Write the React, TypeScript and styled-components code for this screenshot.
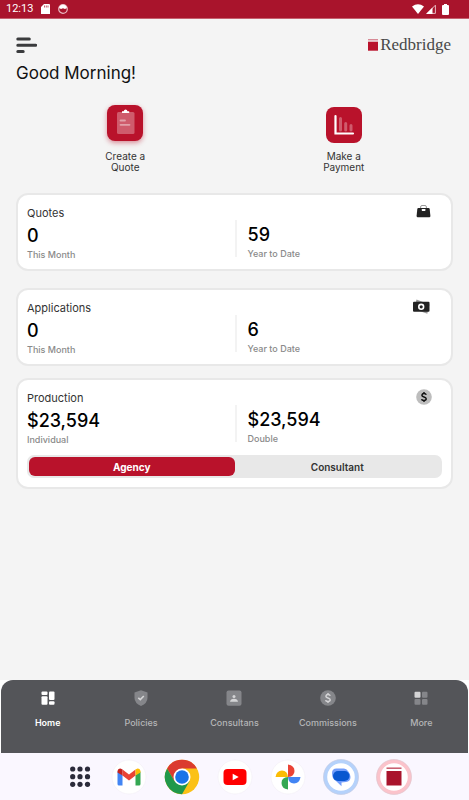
import React, { useState } from "react";
import styled, { createGlobalStyle } from "styled-components";

const GlobalStyle = createGlobalStyle`
  * { box-sizing: border-box; }
  body { margin: 0; background: #f4f4f4; }
  button { font: inherit; color: inherit; border: 0; padding: 0; background: none; cursor: pointer; }
  svg { display: block; flex: none; }
`;

const Screen = styled.div`
  display: flex;
  flex-direction: column;
  min-height: 100vh;
  background: #f4f4f4;
  color: #111;
  font-family: Inter, "Liberation Sans", sans-serif;
`;

const StatusBar = styled.div`
  display: flex;
  align-items: center;
  justify-content: space-between;
  height: 19px;
  padding: 0 20px 0 6px;
  background: #a9142c;
  border-bottom: 1px solid #c5616f;
  color: #fff;
  font: 400 11px/18px Roboto, sans-serif;
`;

const StatusGroup = styled.div<{ $gap: number }>`
  display: flex;
  align-items: center;
  gap: ${(p) => p.$gap}px;
`;

const Content = styled.main`
  flex: 1;
  padding: 17px 16px 24px;
`;

const TopBar = styled.header`
  display: flex;
  align-items: flex-start;
  justify-content: space-between;
  height: 26px;
`;

const Brand = styled.div`
  display: flex;
  align-items: center;
  gap: 2px;
  padding-right: 2px;
  color: #484848;
  font: 17px/18px "Liberation Serif", serif;
`;

const Greeting = styled.h1`
  margin: 0;
  font-size: 17px;
  line-height: 22px;
  font-weight: 400;
`;

const Actions = styled.div`
  display: grid;
  grid-template-columns: 1fr 1fr;
  margin: 21px 0 20px;
`;

const Action = styled.button`
  display: flex;
  flex-direction: column;
  align-items: center;
  justify-content: space-between;
  justify-self: center;
  width: 64px;
  height: 68px;
  font-size: 10px;
  line-height: 11px;
  color: #333;
`;

const ActionTile = styled.span<{ $raised?: boolean }>`
  display: block;
  width: 36px;
  height: 36px;
  margin-top: ${(p) => (p.$raised ? 0 : 2)}px;
  border-radius: 8px;
  background: #b9122b;
  box-shadow: ${(p) => (p.$raised ? "0 2px 5px rgba(185, 18, 43, 0.45)" : "none")};
`;

const ActionLabel = styled.span`
  width: 46px;
`;

const Card = styled.section<{ $gap: number }>`
  margin-bottom: ${(p) => p.$gap}px;
  padding: 9px;
  border: 2px solid #e8e8e8;
  border-radius: 12px;
  background: #fff;
`;

const CardHead = styled.div`
  display: flex;
  align-items: flex-start;
  justify-content: space-between;
  height: 16px;
  padding-right: 10px;
`;

const CardTitle = styled.h2`
  margin: 0;
  font-size: 11px;
  line-height: 18px;
  font-weight: 400;
  color: #333;
`;

const Stats = styled.div`
  display: grid;
  grid-template-columns: 1fr 1fr;
  padding-bottom: 3px;
`;

const Stat = styled.div<{ $divided?: boolean }>`
  height: 37px;
  padding: ${(p) => (p.$divided ? "4px 0 0 11px" : "5px 0 0")};
  border-left: ${(p) => (p.$divided ? "2px solid #f3f3f3" : "0")};
`;

const StatValue = styled.div`
  font-size: 18px;
  line-height: 22px;
  font-weight: 500;
  color: #000;
`;

const StatLabel = styled.div`
  font-size: 9px;
  line-height: 16px;
  font-weight: 500;
  color: #8a8a8a;
`;

const Toggle = styled.div`
  display: grid;
  grid-template-columns: 1fr 1fr;
  margin-top: 10px;
  padding: 2px;
  border-radius: 7px;
  background: #e8e8e8;
`;

const ToggleButton = styled.button<{ $active: boolean }>`
  height: 19px;
  border-radius: 6px;
  background: ${(p) => (p.$active ? "#b9122b" : "transparent")};
  color: ${(p) => (p.$active ? "#fff" : "#333")};
  font-size: 10px;
  line-height: 20px;
  font-weight: ${(p) => (p.$active ? 700 : 600)};
`;

const NavBack = styled.div`
  padding: 0 1px;
  background: #fff;
`;

const Nav = styled.nav`
  display: grid;
  grid-template-columns: repeat(5, 1fr);
  height: 73px;
  padding-top: 10px;
  border-radius: 12px 12px 0 0;
  background: #545559;
`;

const NavItem = styled.button<{ $active: boolean }>`
  display: flex;
  flex-direction: column;
  align-items: center;
  gap: 11px;
  height: 40px;
  font-size: 9px;
  line-height: 12px;
  font-weight: ${(p) => (p.$active ? 600 : 500)};
  color: ${(p) => (p.$active ? "#fff" : "#b4b5b7")};
`;

const Dock = styled.div`
  display: flex;
  justify-content: center;
  height: 47px;
  background: #faf7ff;
`;

const DockButton = styled.button<{ $inset?: boolean }>`
  display: flex;
  align-items: center;
  justify-content: center;
  width: 53px;
  padding-left: ${(p) => (p.$inset ? 8 : 0)}px;
`;

const DockIcon = styled.svg`
  width: 36px;
  height: 36px;
`;

const BriefcaseIcon = () => (
  <svg width="16" height="16" viewBox="0 0 16 16">
    <path d="M4.600 4.500V3Q4.600 1.500 6 1.500h3q1.400 0 1.400 1.500v1.500" fill="none" stroke="#999" strokeWidth="1" />
    <path d="M2.300 4h10.400q.9 0 1 .9l.7 7.100q0 1.300-1.100 1.300H1.700Q.6 13.300.6 12l.7-7.100q.1-.9 1-.9z" fill="#222" />
    <rect x="5.800" y="5" width="3.600" height="2" rx=".4" fill="#fff" />
  </svg>
);

const CashIcon = () => (
  <svg width="20" height="16" viewBox="0 0 20 16">
    <path d="M4.500.5 17.500 5.500 15.300 14.700 2 10z" fill="#999" />
    <rect x="1" y="2.800" width="16.500" height="10" rx="1" fill="#222" />
    <circle cx="9.200" cy="7.800" r="2.400" fill="#222" stroke="#fff" strokeWidth="1.600" />
  </svg>
);

const CoinIcon = ({ disc, ink }: { disc: string; ink: string }) => (
  <svg width="16" height="16" viewBox="0 0 16 16">
    <circle cx="8" cy="8" r="7.800" fill={disc} />
    <path d="M10.300 5.700Q9.800 4.600 8 4.600T5.900 6.200Q5.900 7.400 8 7.900T10.200 9.800Q10.200 11.400 8 11.400T5.600 10.100M8 2.900v1.800M8 11.300v1.800" fill="none" stroke={ink} strokeWidth="1.500" />
  </svg>
);

const ClipboardArt = () => (
  <svg width="36" height="36" viewBox="0 0 36 36">
    <rect x="10" y="7" width="17.500" height="22" rx="1.500" fill="#cf5b6c" />
    <path d="M15 8V6.300h1.700Q17 4.500 18.600 4.500T20.500 6.300h1.700V8z" fill="#fff" />
    <path d="M13.500 15.500h4.500M13.500 19.800h9" stroke="#e2a0a9" strokeWidth="1.800" strokeLinecap="round" />
  </svg>
);

const ChartArt = () => (
  <svg width="36" height="36" viewBox="0 0 36 36">
    <path d="M14.500 11.500v11.500M19.700 16.500v6.500M25 18.500v4.500" stroke="#cf5b6c" strokeWidth="3" strokeLinecap="round" />
    <path d="M9.500 9v17.500h17.500" fill="none" stroke="#fff" strokeWidth="2.200" strokeLinecap="round" />
  </svg>
);

const HomeIcon = () => (
  <svg width="16" height="16" viewBox="0 0 16 16" fill="#fff">
    <rect x="1.500" y="1.500" width="6" height="3.500" rx="1" />
    <rect x="1.500" y="6.300" width="6" height="8.500" rx="1" />
    <rect x="9" y="1.500" width="5.500" height="8.500" rx="1" />
    <rect x="9" y="11.300" width="5.500" height="3.500" rx="1" />
  </svg>
);

const ShieldIcon = () => (
  <svg width="16" height="16" viewBox="0 0 16 16">
    <path d="M8 .3 14.500 2.500V8Q14.500 13 8 16 1.500 13 1.500 8V2.500z" fill="#85868a" />
    <path d="m5.300 7.800 2 1.800 3.500-3.600" fill="none" stroke="#d4d4d6" strokeWidth="1.600" />
  </svg>
);

const PersonIcon = () => (
  <svg width="16" height="16" viewBox="0 0 16 16">
    <rect x=".5" y=".5" width="15" height="15.300" rx="2" fill="#85868a" />
    <circle cx="8" cy="6.400" r="1.500" fill="#d4d4d6" />
    <path d="M4 11.700Q4.500 8.800 8 8.800t4 2.900z" fill="#d4d4d6" />
  </svg>
);

const MoreIcon = () => (
  <svg width="16" height="16" viewBox="0 0 16 16" fill="#85868a">
    <rect x="1.500" y="1.700" width="6" height="6" rx="1" fill="#d4d4d6" />
    <rect x="9" y="1.700" width="5.500" height="6" rx="1" />
    <rect x="1.500" y="9" width="6" height="5.800" rx="1" />
    <rect x="9" y="9" width="5.500" height="5.800" rx="1" />
  </svg>
);

const Plate = () => <circle cx="18" cy="18" r="17" fill="#fff" stroke="#f1eff5" strokeWidth=".6" />;

const dockApps = [
  {
    name: "All apps",
    art: <g fill="#2b2b3b">{[10, 17.700, 25.300].map((y) => [10.700, 18, 25.500].map((x) => <circle key={`${x}-${y}`} cx={x} cy={y} r="2.600" />))}</g>,
  },
  {
    name: "Gmail",
    art: (
      <>
        <Plate />
        <path d="M6.500 12.500 11.500 16v10.500H8q-1.500 0-1.500-1.500z" fill="#4285f4" />
        <path d="M24.500 16 29.500 12.500V25q0 1.500-1.500 1.500h-3.500z" fill="#34a853" />
        <path d="M11.500 16.500V10.500l6.500 5 6.500-5v6L18 21.500z" fill="#ea4335" />
        <path d="M6.500 12.500Q6.700 9.500 9.500 9.500l2 1v6l-5-3z" fill="#c5221f" />
        <path d="M29.500 12.500Q29.300 9.500 26.500 9.500l-2 1v6l5-3z" fill="#fbbc04" />
      </>
    ),
  },
  {
    name: "Chrome",
    art: (
      <>
        <circle cx="18" cy="18" r="17.200" fill="#fbc116" />
        <path d="M3.100 9.400A17.200 17.200 0 0 1 32.900 9.400H18L10.500 22.300z" fill="#db3b2f" />
        <path d="M3.100 9.400A17.200 17.200 0 0 0 18 35.200L25.500 22.300H10.500z" fill="#20984b" />
        <circle cx="18" cy="18" r="8.500" fill="#fff" />
        <circle cx="18" cy="18" r="6.800" fill="#1a73e8" />
      </>
    ),
  },
  {
    name: "YouTube",
    art: (
      <>
        <Plate />
        <rect x="6.500" y="10" width="23" height="16" rx="4" fill="#f00" />
        <path d="m15.700 14.700 6 3.300-6 3.300z" fill="#fff" />
      </>
    ),
  },
  {
    name: "Photos",
    art: (
      <>
        <Plate />
        <path d="M18 5.500Q24.500 6.500 24.500 12T18 18z" fill="#ea4335" />
        <path d="M30.500 18Q29.500 24.500 24 24.500T18 18z" fill="#4285f4" />
        <path d="M18 30.500Q11.500 29.500 11.500 24T18 18z" fill="#34a853" />
        <path d="M5.500 18Q6.500 11.500 12 11.500T18 18z" fill="#fbbc04" />
      </>
    ),
  },
  {
    name: "Messages",
    art: (
      <>
        <circle cx="18" cy="18" r="15.700" fill="#fff" stroke="#b5d2fb" strokeWidth="3.800" />
        <circle cx="18" cy="18" r="17.500" fill="none" stroke="#c6cce2" strokeWidth=".7" />
        <path d="M13.500 9.500h7.500q2.500 0 4 2.500 2.500 3 2.500 6 0 4.500-4.500 5l-4.500.5v3.800l-5.500-5.300Q9 20 9 14q0-4.500 4.500-4.500z" fill="#729dfb" />
        <rect x="10" y="12" width="16.500" height="10" rx="5" fill="#0957d0" />
      </>
    ),
  },
  {
    name: "Redbridge",
    art: (
      <>
        <circle cx="18" cy="18" r="15.700" fill="#fff" stroke="#fbc3cb" strokeWidth="3.800" />
        <circle cx="18" cy="18" r="17.500" fill="none" stroke="#dfc7d0" strokeWidth=".7" />
        <path d="M10.500 9.200h15" stroke="#c65a6b" strokeWidth="1.500" />
        <rect x="10.500" y="12" width="15" height="14.500" fill="#a9142c" />
      </>
    ),
  },
];

const navItems = [
  { name: "Home", icon: <HomeIcon /> },
  { name: "Policies", icon: <ShieldIcon /> },
  { name: "Consultans", icon: <PersonIcon /> },
  { name: "Commissions", icon: <CoinIcon disc="#85868a" ink="#d4d4d6" /> },
  { name: "More", icon: <MoreIcon /> },
];

type Figure = { value: string; label: string };

function StatCard(props: { title: string; icon: React.ReactNode; figures: [Figure, Figure]; gap: number; children?: React.ReactNode }) {
  return (
    <Card $gap={props.gap}>
      <CardHead>
        <CardTitle>{props.title}</CardTitle>
        {props.icon}
      </CardHead>
      <Stats>
        {props.figures.map((figure, i) => (
          <Stat key={figure.label} $divided={i === 1}>
            <StatValue>{figure.value}</StatValue>
            <StatLabel>{figure.label}</StatLabel>
          </Stat>
        ))}
      </Stats>
      {props.children}
    </Card>
  );
}

export default function App() {
  const [role, setRole] = useState("Agency");
  const [page, setPage] = useState("Home");

  return (
    <Screen>
      <GlobalStyle />
      <StatusBar>
        <StatusGroup $gap={8}>
          <span>12:13</span>
          <svg width="9" height="10" viewBox="0 0 9 10">
            <path d="M3 0h5q1 0 1 1v9H0V3z" fill="#fff" />
            <path d="M3.500 1.500v2M5.300 1.500v2M7 1.500v2" stroke="#a9142c" strokeWidth=".7" />
          </svg>
          <svg width="10" height="10" viewBox="0 0 10 10">
            <circle cx="5" cy="5" r="4.300" fill="none" stroke="#e8b9c1" strokeWidth="1.200" />
            <path d="M1 4Q2 .8 5 .8T9 4L7 5 5 4.300 3 5z" fill="#fff" />
          </svg>
        </StatusGroup>
        <StatusGroup $gap={2}>
          <svg width="12" height="10" viewBox="0 0 12 10"><path d="M0 2.500Q6-2 12 2.500L6 10z" fill="#fff" /></svg>
          <svg width="10" height="10" viewBox="0 0 10 10">
            <path d="M1.200 9.400 9.400 1.200V9.400z" fill="none" stroke="#e8b9c1" strokeWidth="1" />
            <path d="M0 10 6.500 3.500V10z" fill="#fff" />
          </svg>
          <svg width="11" height="11" viewBox="0 0 11 11"><path d="M5 1h1V0h3v1h1q1 0 1 1v8q0 1-1 1H5q-1 0-1-1V2q0-1 1-1z" fill="#fff" /></svg>
        </StatusGroup>
      </StatusBar>

      <Content>
        <TopBar>
          <button aria-label="Open menu">
            <svg width="21" height="18" viewBox="0 0 21 18" fill="none" stroke="#3a3b3d" strokeWidth="3" strokeLinecap="round">
              <path d="M1.800 3h11.500M1.800 9.200h18M1.800 15.500h5.400" />
            </svg>
          </button>
          <Brand>
            <svg width="10" height="12" viewBox="0 0 10 12">
              <path d="M0 .7h10" stroke="#d78a96" strokeWidth="1.400" />
              <rect y="2.700" width="10" height="9" fill="#b9122b" />
            </svg>
            <span>Redbridge</span>
          </Brand>
        </TopBar>
        <Greeting>Good Morning!</Greeting>

        <Actions>
          <Action>
            <ActionTile $raised><ClipboardArt /></ActionTile>
            <ActionLabel>Create a Quote</ActionLabel>
          </Action>
          <Action>
            <ActionTile><ChartArt /></ActionTile>
            <ActionLabel>Make a Payment</ActionLabel>
          </Action>
        </Actions>

        <StatCard title="Quotes" icon={<BriefcaseIcon />} gap={17} figures={[{ value: "0", label: "This Month" }, { value: "59", label: "Year to Date" }]} />
        <StatCard title="Applications" icon={<CashIcon />} gap={12} figures={[{ value: "0", label: "This Month" }, { value: "6", label: "Year to Date" }]} />
        <StatCard title="Production" icon={<CoinIcon disc="#bdbdbd" ink="#111" />} gap={0} figures={[{ value: "$23,594", label: "Individual" }, { value: "$23,594", label: "Double" }]}>
          <Toggle>
            {["Agency", "Consultant"].map((name) => (
              <ToggleButton key={name} $active={role === name} aria-pressed={role === name} onClick={() => setRole(name)}>
                {name}
              </ToggleButton>
            ))}
          </Toggle>
        </StatCard>
      </Content>

      <NavBack>
        <Nav>
          {navItems.map((item) => (
            <NavItem key={item.name} $active={page === item.name} onClick={() => setPage(item.name)}>
              {item.icon}
              {item.name}
            </NavItem>
          ))}
        </Nav>
      </NavBack>
      <Dock>
        {dockApps.map((app, i) => (
          <DockButton key={app.name} $inset={i === 0} aria-label={app.name}>
            <DockIcon viewBox="0 0 36 36">{app.art}</DockIcon>
          </DockButton>
        ))}
      </Dock>
    </Screen>
  );
}
